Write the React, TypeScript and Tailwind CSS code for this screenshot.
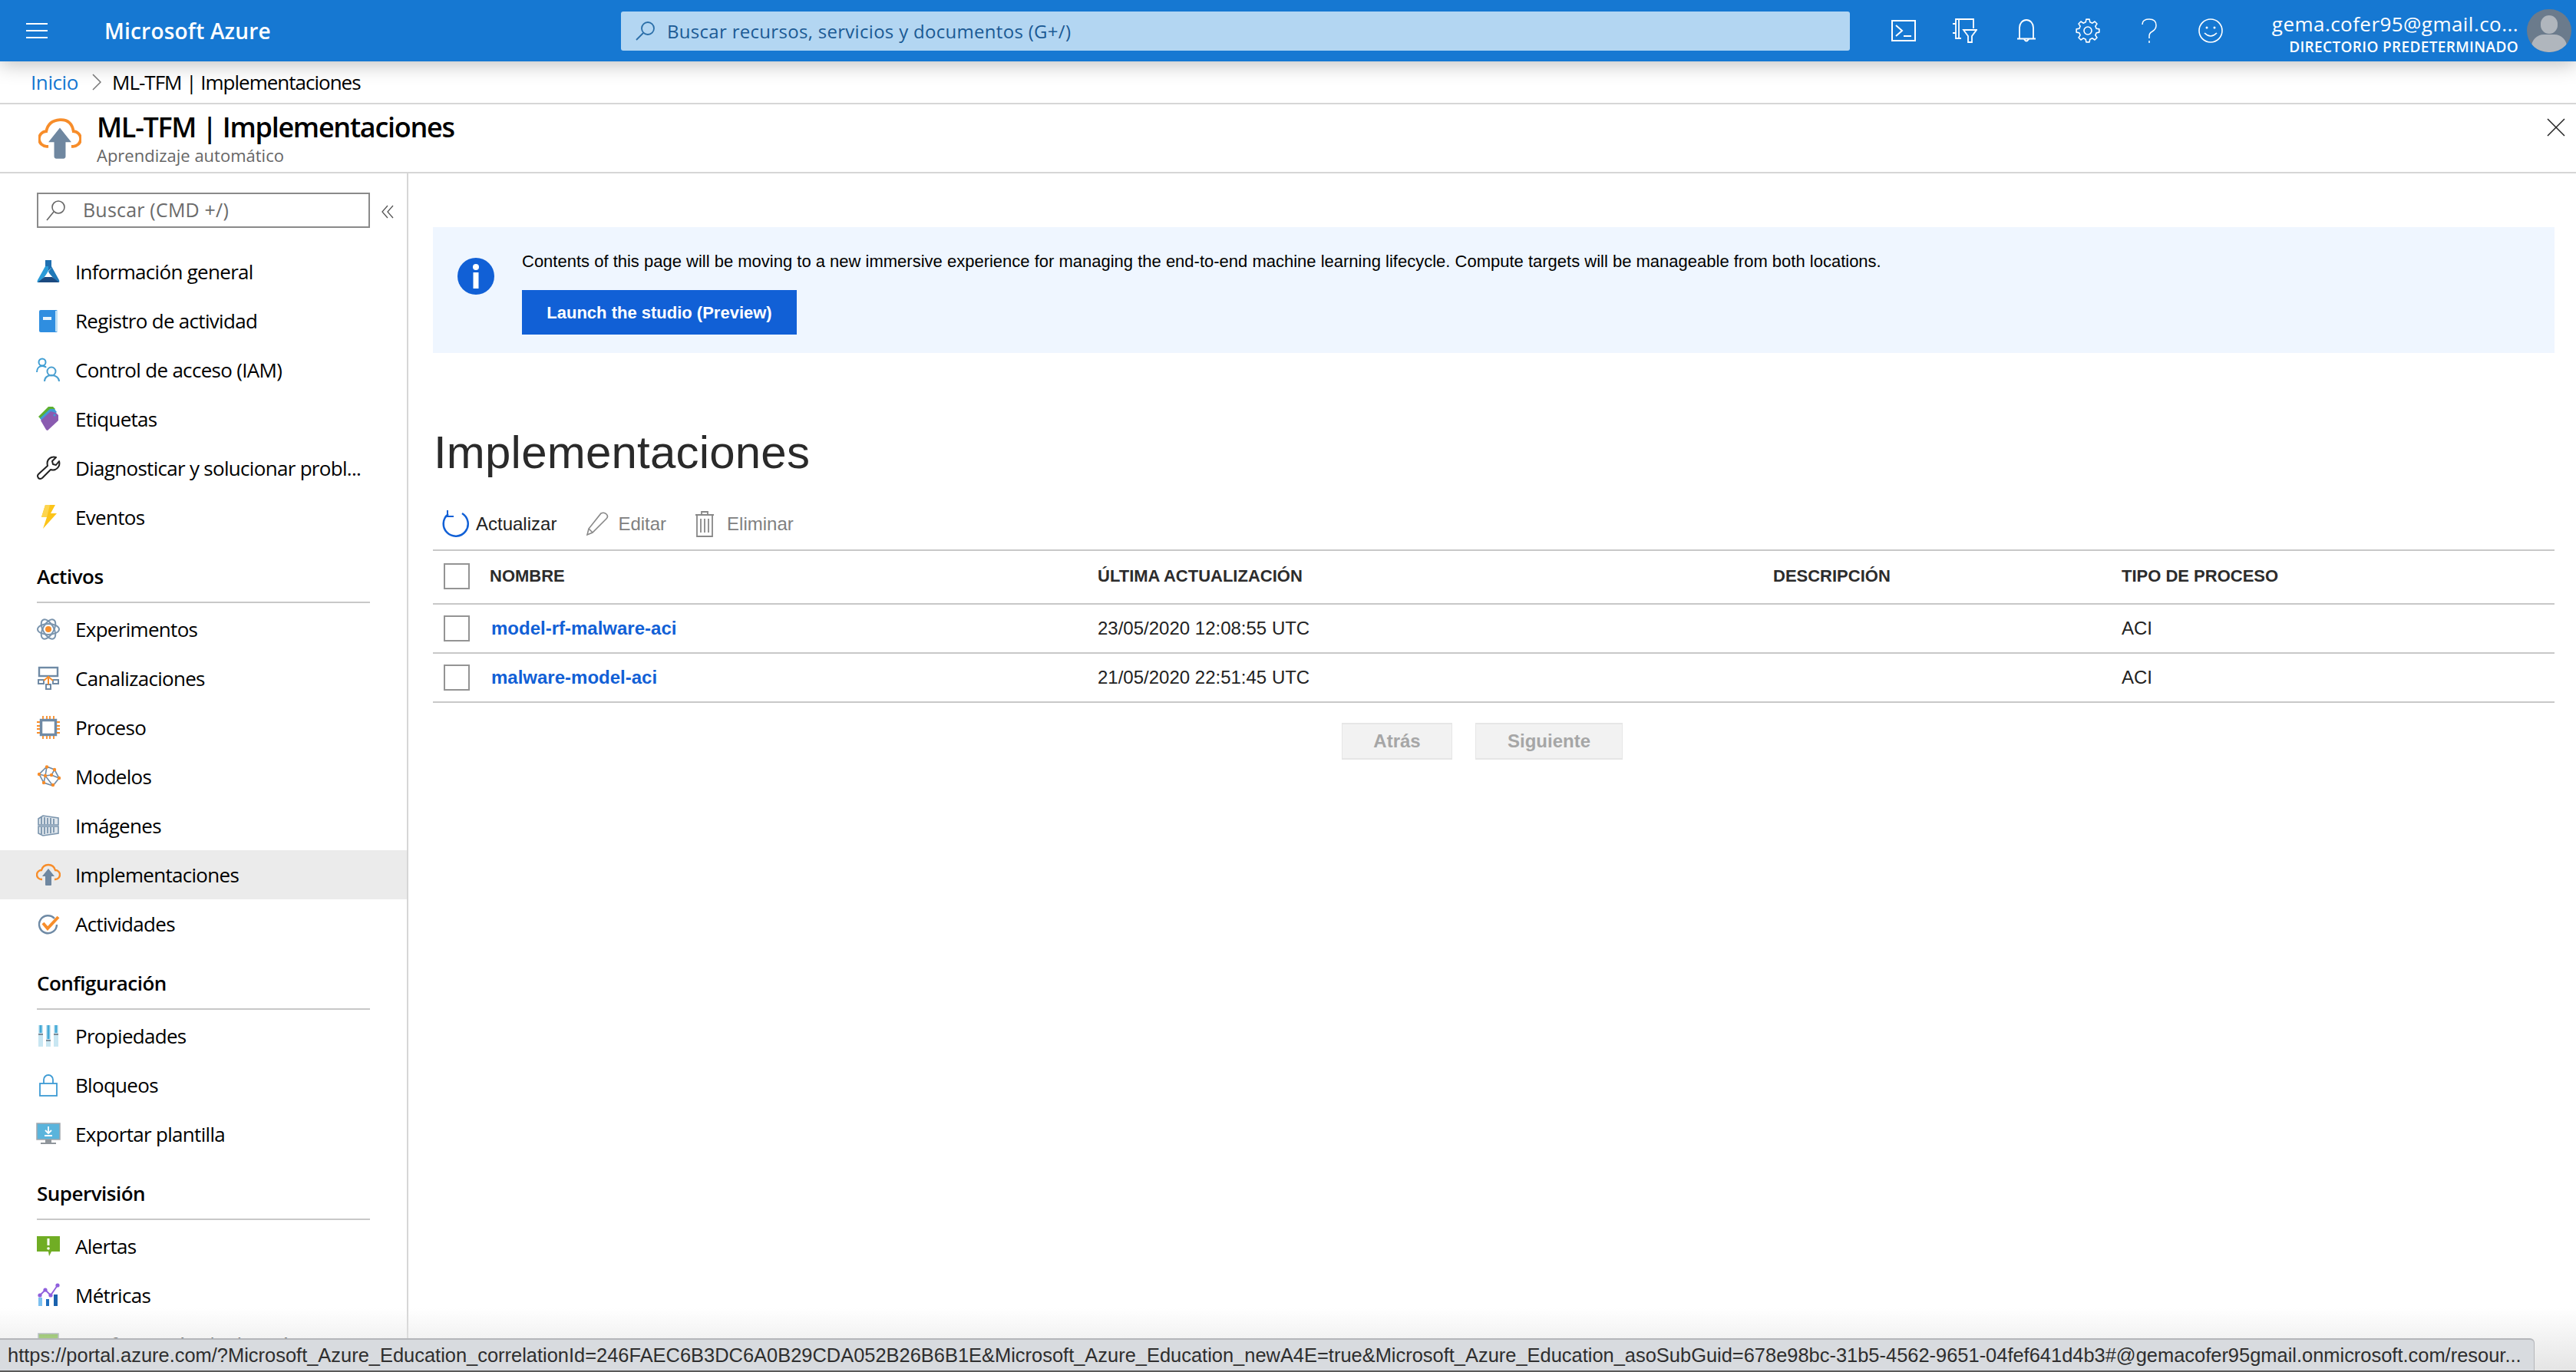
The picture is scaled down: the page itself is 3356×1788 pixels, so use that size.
import type { ReactNode } from "react";

const sans = "font-['Open_Sans',sans-serif]";
const helv = "font-['Liberation_Sans',Arial,sans-serif]";

// iconos de la barra lateral, caja de 32x32
function Ico({ children }: { children: ReactNode }) {
  return (
    <svg viewBox="0 0 32 32" className="h-[32px] w-[32px] shrink-0" fill="none">
      {children}
    </svg>
  );
}

const icons: Record<string, ReactNode> = {
  flask: (
    <Ico>
      <path d="M12 1h8v10l-4 4-4-4z" fill="#1f6fb0" />
      <path d="M12 9h4v6L7 30H2q-1 0 0-3z" fill="#2a9bd8" />
      <path d="M20 9l10 18q1 3-1 3h-6l-7-14 4-5z" fill="#1f78b8" />
      <path d="M16 17l8 9H8z" fill="#fff" />
      <path d="M2 30l9-7h10l9 7z" fill="#1b4a80" />
    </Ico>
  ),
  book: (
    <Ico>
      <rect x="4" y="2" width="24" height="29" rx="2" fill="#2f8ee0" />
      <path d="M25 3h3v27h-3z" fill="#bfe0f5" />
      <rect x="9" y="11" width="11" height="4" fill="#e8f4fc" />
    </Ico>
  ),
  people: (
    <Ico>
      <circle cx="8" cy="6" r="4.500" stroke="#3f9ed4" strokeWidth="2" />
      <path d="M1 19c0-5 3-8 7-8 2 0 4 .5 5 2" stroke="#3f9ed4" strokeWidth="2" />
      <circle cx="20" cy="18" r="5.500" stroke="#4a9fd0" strokeWidth="2" />
      <path d="M11 31c0-5 4-8 9-8s10 3 10 8" stroke="#4a9fd0" strokeWidth="2" />
    </Ico>
  ),
  tags: (
    <Ico>
      <path d="M3 13L16 0h6l3 3L9 19z" fill="#5cb030" />
      <path d="M5 15L18 3h6l3 4L10 22z" fill="#3f9bd6" />
      <path d="M6 18L19 6l7 2 3 3v7L15 31q-1 0-2-1z" fill="#8a5bb0" />
      <circle cx="24" cy="11" r="1.500" fill="#3f9bd6" />
    </Ico>
  ),
  wrench: (
    <Ico>
      <path d="M3 24L15 13Q13 5 20 2Q23 1 26 2L21 7L22 11L26 12L30 7Q32 14 25 18Q22 19 19 18L8 29Q5 31 3 29Q1 26 3 24z" stroke="#222" strokeWidth="2" strokeLinejoin="round" />
    </Ico>
  ),
  bolt: (
    <Ico>
      <path d="M12 0H25L19 11H27L9 31L14 16H7z" fill="#fcc419" />
      <path d="M12 0H18L14 16H7z" fill="#fdd54f" />
    </Ico>
  ),
  atom: (
    <Ico>
      <circle cx="16" cy="16" r="4" fill="#f78d2a" />
      <ellipse cx="16" cy="16" rx="14" ry="7" stroke="#7a94ad" strokeWidth="2" />
      <ellipse cx="16" cy="16" rx="14" ry="7" stroke="#7a94ad" strokeWidth="2" transform="rotate(60 16 16)" />
      <ellipse cx="16" cy="16" rx="14" ry="7" stroke="#7a94ad" strokeWidth="2" transform="rotate(120 16 16)" />
    </Ico>
  ),
  pipe: (
    <Ico>
      <rect x="4" y="2" width="24" height="11" stroke="#6f8aa5" strokeWidth="2.400" />
      <rect x="3" y="18" width="7" height="5" stroke="#6f8aa5" strokeWidth="2" />
      <rect x="22" y="18" width="7" height="5" stroke="#6f8aa5" strokeWidth="2" />
      <rect x="13" y="24" width="6" height="6" stroke="#6f8aa5" strokeWidth="2" />
      <path d="M16 13v11M10 19l6-5 6 5" stroke="#f78d2a" strokeWidth="2" />
    </Ico>
  ),
  chip: (
    <Ico>
      <rect x="6.500" y="6.500" width="19" height="19" fill="#fff" stroke="#6f8aa5" strokeWidth="3.500" />
      <path d="M1 9h4M1 14h4M1 18h4M1 23h4M27 9h4M27 14h4M27 18h4M27 23h4M9 1v4M14 1v4M18 1v4M23 1v4M9 27v4M14 27v4M18 27v4M23 27v4" stroke="#f78d2a" strokeWidth="1.800" />
    </Ico>
  ),
  net: (
    <Ico>
      <path d="M14 3L4 13l6 11 12 4 8-10-6-11zM14 3l-2 12 10 13M4 13l8 2-2 9M24 7l-4 7 10 4M12 15l8-1" stroke="#6f8aa5" strokeWidth="1.600" />
      <circle cx="14" cy="3.500" r="2.200" fill="#f78d2a" />
      <circle cx="4" cy="13" r="2.200" fill="#f78d2a" />
      <circle cx="12" cy="15" r="2.200" fill="#f78d2a" />
      <circle cx="22" cy="27" r="2.200" fill="#f78d2a" />
      <circle cx="30" cy="18" r="2.200" fill="#f78d2a" />
      <circle cx="24" cy="7" r="2.200" fill="#f78d2a" />
      <circle cx="10" cy="24" r="2.200" fill="#f78d2a" />
      <circle cx="20" cy="14" r="2.200" fill="#f78d2a" />
    </Ico>
  ),
  images: (
    <Ico>
      <path d="M3 7l6-4 20 3v9l-26 0zM3 17h26v9l-20 3-6-3z" fill="#dfe6ec" stroke="#7a94ad" strokeWidth="1.600" />
      <path d="M7 5v9M11 5v9M15 6v8M19 6v8M23 7v7M7 18v9M11 18v9M15 18v8M19 18v8M23 18v7" stroke="#7a94ad" strokeWidth="1.800" />
    </Ico>
  ),
  cloud: (
    <Ico>
      <path d="M8 22h-1a6 6 0 0 1 0-12q2-7 9-7t9 7a6 6 0 0 1 0 12h-1" stroke="#f78d2a" strokeWidth="2.400" />
      <path d="M16 8l8 10h-4v11q0 1-1 1h-6q-1 0-1-1V18H8z" fill="#6f87a0" />
    </Ico>
  ),
  check: (
    <Ico>
      <path d="M24 9a11.500 11.500 0 1 0 3 8" stroke="#6f8aa5" strokeWidth="2.400" />
      <path d="M9 15l6 7L29 7" stroke="#f78d2a" strokeWidth="4" />
    </Ico>
  ),
  sliders: (
    <Ico>
      <path d="M3 2h6v28H3zM13 2h6v28h-6zM23 2h6v28h-6z" fill="#c8e6f2" />
      <path d="M4.500 2h3v10h-3zM14.500 2h3v18h-3zM24.500 2h3v10h-3z" fill="#45a9d6" />
      <path d="M3 13h6v2H3zM13 21h6v2h-6zM23 13h6v2h-6z" fill="#7d8b96" />
    </Ico>
  ),
  lock: (
    <Ico>
      <rect x="5" y="14" width="22" height="16" stroke="#3e9bd4" strokeWidth="1.800" />
      <path d="M10 14V9a6 6 0 0 1 12 0v5" stroke="#3e9bd4" strokeWidth="1.800" />
    </Ico>
  ),
  monitor: (
    <Ico>
      <rect x="1" y="2" width="30" height="21" fill="#5ab4dc" stroke="#a1a7ad" strokeWidth="1.500" />
      <path d="M16 6v9M12 11l4 4 4-4M11 18h10" stroke="#fff" strokeWidth="1.800" />
      <path d="M12 23h8v4h-8zM6 27h20v2H6z" fill="#8f959b" />
    </Ico>
  ),
  alert: (
    <Ico>
      <path d="M1 3h30v20H20l-3 6-1-6H1z" fill="#70ad24" />
      <path d="M16 6v9" stroke="#fff" strokeWidth="3" />
      <circle cx="16" cy="19" r="1.800" fill="#fff" />
    </Ico>
  ),
  metrics: (
    <Ico>
      <path d="M3 19h5v11H3z" fill="#7cc0f0" />
      <path d="M13 21h4v9h-4z" fill="#1f6fc0" />
      <path d="M23 15h5v15h-5z" fill="#1a62ad" />
      <path d="M5 16l7-7 7 7 9-13" stroke="#8f5fdc" strokeWidth="1.800" />
      <circle cx="5" cy="16" r="2.600" fill="#8f5fdc" />
      <circle cx="12" cy="9" r="2.600" fill="#8f5fdc" />
      <circle cx="19" cy="16" r="2.600" fill="#8f5fdc" />
      <circle cx="28" cy="3" r="2.600" fill="#8f5fdc" />
    </Ico>
  ),
  diag: (
    <Ico>
      <rect x="3" y="2" width="26" height="28" fill="#6fb52c" stroke="#9aa5ad" strokeWidth="1.500" />
    </Ico>
  ),
};

const groups: { title?: string; items: [string, string][] }[] = [
  {
    items: [
      ["flask", "Información general"],
      ["book", "Registro de actividad"],
      ["people", "Control de acceso (IAM)"],
      ["tags", "Etiquetas"],
      ["wrench", "Diagnosticar y solucionar probl..."],
      ["bolt", "Eventos"],
    ],
  },
  {
    title: "Activos",
    items: [
      ["atom", "Experimentos"],
      ["pipe", "Canalizaciones"],
      ["chip", "Proceso"],
      ["net", "Modelos"],
      ["images", "Imágenes"],
      ["cloud", "Implementaciones"],
      ["check", "Actividades"],
    ],
  },
  {
    title: "Configuración",
    items: [
      ["sliders", "Propiedades"],
      ["lock", "Bloqueos"],
      ["monitor", "Exportar plantilla"],
    ],
  },
  {
    title: "Supervisión",
    items: [
      ["alert", "Alertas"],
      ["metrics", "Métricas"],
      ["diag", "Configuración de diagnóstico"],
    ],
  },
];

// contorno del engranaje: 8 dientes alrededor de (16,16)
const gearPath =
  Array.from({ length: 8 }, (_, k) => {
    const a = (k * Math.PI) / 4;
    const pt = (r: number, d: number) => {
      const t = a + (d * Math.PI) / 180;
      return `${(16 + r * Math.cos(t)).toFixed(2)} ${(16 + r * Math.sin(t)).toFixed(2)}`;
    };
    return `${k === 0 ? "M" : "L"}${pt(11.5, -14)} L${pt(15, -8)} L${pt(15, 8)} L${pt(11.5, 14)}`;
  }).join(" ") + "z";

function TopIcons() {
  const cell = "flex h-[32px] w-[80px] items-center justify-center";
  return (
    <div className="flex items-center text-white">
      <div className={cell}>
        <svg viewBox="0 0 32 28" className="h-[28px] w-[32px]" fill="none" stroke="currentColor" strokeWidth="2">
          <rect x="1" y="1" width="30" height="26" />
          <path d="M6 7l8 7-8 7M16 21h10" />
        </svg>
      </div>
      <div className={cell}>
        <svg viewBox="0 0 32 32" className="h-[32px] w-[32px]" fill="none" stroke="currentColor" strokeWidth="1.800">
          <path d="M11 26H4V1h23v12M8 1v25M0 7h4M0 19h4" />
          <path d="M14 15h17l-6 8v8h-5v-8z" />
        </svg>
      </div>
      <div className={cell}>
        <svg viewBox="0 0 24 30" className="h-[30px] w-[24px]" fill="none" stroke="currentColor" strokeWidth="1.800">
          <path d="M3 25V11a9 10 0 0 1 18 0v14M0 25.500h24M9 26q3 5 6 0" />
        </svg>
      </div>
      <div className={cell}>
        <svg viewBox="0 0 32 32" className="h-[32px] w-[32px]" fill="none" stroke="currentColor" strokeWidth="1.600">
          <circle cx="16" cy="16" r="5" />
          <path d={gearPath} strokeLinejoin="round" />
        </svg>
      </div>
      <div className={cell}>
        <svg viewBox="0 0 20 32" className="h-[32px] w-[20px]" fill="none" stroke="currentColor" strokeWidth="1.500">
          <path d="M1 8Q1 1 10 1Q19 1 19 9Q19 14 14 17Q10 19 10 23V26M10 29V32" />
        </svg>
      </div>
      <div className={cell}>
        <svg viewBox="0 0 32 32" className="h-[32px] w-[32px]" fill="none" stroke="currentColor" strokeWidth="1.600">
          <circle cx="16" cy="16" r="15" />
          <circle cx="11" cy="12" r="1.500" fill="currentColor" stroke="none" />
          <circle cx="21" cy="12" r="1.500" fill="currentColor" stroke="none" />
          <path d="M8 19Q16 27 24 19" />
        </svg>
      </div>
    </div>
  );
}

export default function App() {
  return (
    <div className="relative h-screen w-full overflow-hidden bg-white text-black">
      {/* barra superior */}
      <header className={`relative z-10 flex h-[80px] items-center bg-[#1678d2] text-white shadow-[0_4px_24px_rgba(0,0,0,0.25)] ${sans}`}>
        <div className="flex w-[96px] shrink-0 justify-center">
          <svg viewBox="0 0 28 20" className="h-[20px] w-[28px]" stroke="#fff" strokeWidth="2">
            <path d="M0 1h28M0 10h28M0 19h28" />
          </svg>
        </div>
        <div className="w-[713px] shrink-0 pl-[40px] text-[28px] font-semibold tracking-[0.2px]">Microsoft Azure</div>
        <div className="flex h-[51px] w-[1601px] shrink-0 items-center rounded-[3px] bg-[#b3d6f2] pl-[18px] text-[#1b5a94]">
          <svg viewBox="0 0 28 28" className="h-[28px] w-[28px]" fill="none" stroke="#2a6ea8" strokeWidth="1.800">
            <circle cx="17" cy="11" r="8" />
            <path d="M11 17L2 26" />
          </svg>
          <span className="ml-[14px] pt-[2px] text-[24px] tracking-[0.3px]">Buscar recursos, servicios y documentos (G+/)</span>
        </div>
        <div className="ml-[30px]">
          <TopIcons />
        </div>
        <div className="ml-auto flex items-center pr-[6px]">
          <div className="mt-[10px] flex flex-col items-end">
            <span className="text-[26px] leading-[32px] tracking-[0.45px]">gema.cofer95@gmail.co...</span>
            <span className="text-[19px] font-semibold leading-[28px] tracking-[0.35px]">DIRECTORIO PREDETERMINADO</span>
          </div>
          <div className="ml-[11px] flex h-[56px] w-[58px] flex-col items-center overflow-hidden rounded-full bg-[#6b7b8c]">
            <div className="mt-[8px] h-[24px] w-[22px] shrink-0 rounded-full bg-[#b0b6bd]" />
            <div className="mt-[1px] h-[24px] w-[46px] shrink-0 rounded-t-[16px] bg-[#b0b6bd]" />
          </div>
        </div>
      </header>

      {/* migas */}
      <div className={`flex h-[56px] items-center border-b-[2px] border-[#d6d6d6] pl-[40px] text-[26px] ${sans}`}>
        <span className="tracking-[-0.4px] text-[#1678d2]">Inicio</span>
        <svg viewBox="0 0 12 24" className="ml-[18px] mr-[14px] h-[24px] w-[12px]" fill="none" stroke="#777" strokeWidth="1.500">
          <path d="M1 2l10 10L1 22" />
        </svg>
        <span className="tracking-[-1px]">ML-TFM | Implementaciones</span>
      </div>

      {/* título */}
      <div className={`flex h-[90px] items-center border-b-[2px] border-[#d6d6d6] pl-[50px] ${sans}`}>
        <svg viewBox="0 0 60 56" className="h-[53px] w-[56px] shrink-0" fill="none">
          <path d="M14 39h-2a10 10 0 0 1-1-21q3-15 19-16t19 16a10 10 0 0 1-1 21h-2" stroke="#f78d2a" strokeWidth="4" />
          <path d="M30 13l16 20H38v20q0 3-3 3h-10q-3 0-3-3V33h-8z" fill="#6f87a0" />
        </svg>
        <div className="ml-[20px]">
          <div className="text-[36px] font-semibold leading-[42px] tracking-[-1.3px]">ML-TFM | Implementaciones</div>
          <div className="mt-[2px] text-[22px] leading-[26px] text-[#666]">Aprendizaje automático</div>
        </div>
        <svg viewBox="0 0 24 24" className="ml-auto mb-[28px] mr-[14px] h-[24px] w-[24px]" fill="none" stroke="#222" strokeWidth="1.500">
          <path d="M1 1l22 22M23 1L1 23" />
        </svg>
      </div>

      <div className="flex h-[1563px]">
        {/* barra lateral */}
        <aside className={`w-[532px] shrink-0 border-r-[2px] border-[#d6d6d6] pt-[25px] ${sans}`}>
          <div className="flex items-center">
            <div className="ml-[48px] flex h-[46px] w-[434px] items-center border-[2px] border-[#8a8a8a] pl-[10px]">
              <svg viewBox="0 0 26 28" className="h-[28px] w-[26px]" fill="none" stroke="#666" strokeWidth="1.600">
                <circle cx="16" cy="10" r="8" />
                <path d="M10 16L1 27" />
              </svg>
              <span className="ml-[22px] text-[25px] tracking-[0.2px] text-[#6b6b6b]">Buscar (CMD +/)</span>
            </div>
            <svg viewBox="0 0 16 18" className="ml-[15px] mt-[4px] h-[18px] w-[16px]" fill="none" stroke="#555" strokeWidth="1.300">
              <path d="M8 1L1 9l7 8M15 1L8 9l7 8" />
            </svg>
          </div>
          <nav className="mt-[25px]">
            {groups.map((g, i) => (
              <div key={i}>
                {g.title && (
                  <div className="mx-[48px] mb-[2px] mt-[14px] flex h-[66px] items-center border-b-[2px] border-[#c8c8c8] pb-[1px] text-[26px] font-semibold tracking-[-0.5px]">
                    {g.title}
                  </div>
                )}
                {g.items.map(([icon, label]) => (
                  <div
                    key={label}
                    className={`flex h-[64px] items-center pl-[47px] text-[26px] tracking-[-0.7px] ${label === "Implementaciones" ? "bg-[#ebebeb]" : ""}`}
                  >
                    {icons[icon]}
                    <span className="ml-[19px] whitespace-nowrap">{label}</span>
                  </div>
                ))}
              </div>
            ))}
          </nav>
        </aside>

        {/* contenido */}
        <main className={`min-w-0 flex-1 pl-[32px] pr-[28px] pt-[70px] ${helv}`}>
          <div className="flex h-[164px] bg-[#eff6ff] pl-[32px] pt-[32px]">
            <svg viewBox="0 0 48 48" className="mt-[8px] h-[48px] w-[48px] shrink-0">
              <circle cx="24" cy="24" r="24" fill="#1160d6" />
              <circle cx="24" cy="12" r="4" fill="#fff" />
              <rect x="20.500" y="19" width="7" height="21" fill="#fff" />
            </svg>
            <div className="ml-[36px]">
              <p className="text-[22px] leading-[26px]">
                Contents of this page will be moving to a new immersive experience for managing the end-to-end machine learning lifecycle. Compute targets will be manageable from both locations.
              </p>
              <div className="mt-[24px] flex h-[58px] w-[358px] items-center justify-center bg-[#1160d6] text-[22px] font-bold text-white">
                Launch the studio (Preview)
              </div>
            </div>
          </div>

          <h1 className="mt-[91px] pl-[1px] text-[60px] font-light leading-[78px] tracking-[0.2px] text-[#2a2a2a]">Implementaciones</h1>

          <div className="mt-[27px] flex h-[54px] items-center pl-[12px] text-[24px]">
            <svg viewBox="0 0 36 36" className="h-[36px] w-[36px]" fill="none" stroke="#1160d6" strokeWidth="2.500">
              <path d="M8 5a16 16 0 1 0 18-1" />
              <path d="M7 0v8h8" strokeWidth="2" />
            </svg>
            <span className="ml-[8px] text-[#222]">Actualizar</span>
            <svg viewBox="0 0 30 32" className="ml-[38px] h-[32px] w-[30px]" fill="none" stroke="#888" strokeWidth="1.600">
              <path d="M2 30l2-8L20 2q4-2 7 1t0 6L9 27z" />
              <path d="M4 22l5 5" />
            </svg>
            <span className="ml-[12px] text-[#808080]">Editar</span>
            <svg viewBox="0 0 26 34" className="ml-[37px] h-[34px] w-[26px]" fill="none" stroke="#888" strokeWidth="1.800">
              <path d="M1 5h24M9 5V1h8v4M3 5v28h20V5M8 10v18M13 10v18M18 10v18" />
            </svg>
            <span className="ml-[16px] text-[#808080]">Eliminar</span>
          </div>

          <div className="mt-[6px] grid grid-cols-[866px_880px_454px_1fr] border-t-[2px] border-[#c8c8c8]">
            <div className="flex h-[70px] items-center border-b-[2px] border-[#c8c8c8] pb-[3px] pl-[14px] text-[22px] font-bold text-[#2c2c2c]">
              <div className="h-[34px] w-[34px] border-[2px] border-[#949494]" />
              <span className="ml-[26px]">NOMBRE</span>
            </div>
            <div className="flex items-center border-b-[2px] border-[#c8c8c8] pb-[3px] text-[22px] font-bold text-[#2c2c2c]">ÚLTIMA ACTUALIZACIÓN</div>
            <div className="flex items-center border-b-[2px] border-[#c8c8c8] pb-[3px] text-[22px] font-bold text-[#2c2c2c]">DESCRIPCIÓN</div>
            <div className="flex items-center border-b-[2px] border-[#c8c8c8] pb-[3px] text-[22px] font-bold text-[#2c2c2c]">TIPO DE PROCESO</div>
            {[
              ["model-rf-malware-aci", "23/05/2020 12:08:55 UTC"],
              ["malware-model-aci", "21/05/2020 22:51:45 UTC"],
            ].map(([name, date]) => (
              <div key={name} className="contents text-[24px]">
                <div className="flex h-[64px] items-center border-b-[2px] border-[#c8c8c8] pl-[14px]">
                  <div className="h-[34px] w-[34px] border-[2px] border-[#949494]" />
                  <span className="ml-[28px] font-bold text-[#1160d6]">{name}</span>
                </div>
                <div className="flex items-center border-b-[2px] border-[#c8c8c8] text-[#222]">{date}</div>
                <div className="border-b-[2px] border-[#c8c8c8]" />
                <div className="flex items-center border-b-[2px] border-[#c8c8c8] text-[#222]">ACI</div>
              </div>
            ))}
          </div>

          <div className="ml-[1184px] mt-[26px] flex gap-[30px] text-[24px] font-bold text-[#a6a6a6]">
            <div className="flex h-[48px] w-[144px] items-center justify-center border-x border-y-[2px] border-[#e6e6e6] bg-[#f2f2f2]">Atrás</div>
            <div className="flex h-[48px] w-[192px] items-center justify-center border-x border-y-[2px] border-[#e6e6e6] bg-[#f2f2f2]">Siguiente</div>
          </div>
        </main>
      </div>

      {/* barra de estado del navegador */}
      <div className="pointer-events-none absolute bottom-0 left-0 right-0 h-[84px] bg-gradient-to-b from-white/0 to-[#e4e4e4]" />
      <div className={`absolute bottom-[2px] left-0 flex h-[42px] w-[3302px] items-center overflow-hidden whitespace-nowrap rounded-tr-[6px] border-r border-t-[2px] border-[#b4b6ba] bg-[#d8dbdf] pl-[10px] text-[25.45px] text-[#2e2e2e] ${helv}`}>
        https://portal.azure.com/?Microsoft_Azure_Education_correlationId=246FAEC6B3DC6A0B29CDA052B26B6B1E&Microsoft_Azure_Education_newA4E=true&Microsoft_Azure_Education_asoSubGuid=678e98bc-31b5-4562-9651-04fef641d4b3#@gemacofer95gmail.onmicrosoft.com/resour...
      </div>
      <div className="absolute bottom-0 left-0 right-0 h-[2px] bg-[#5a5a5a]" />
    </div>
  );
}
